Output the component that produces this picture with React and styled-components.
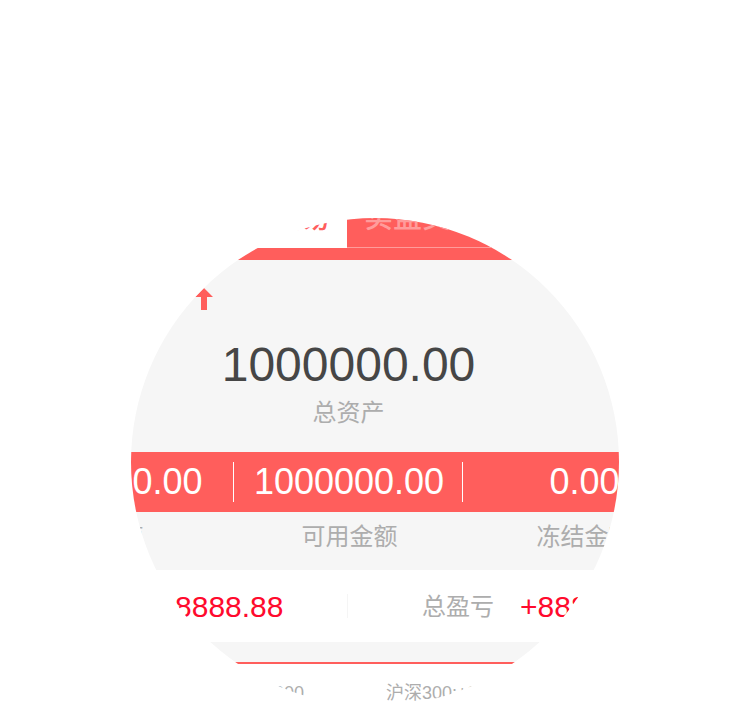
import React from "react";
import styled, { createGlobalStyle } from "styled-components";

const GlobalStyle = createGlobalStyle`
  * { box-sizing: border-box; }
  body {
    margin: 0;
    background: #fff;
    font-family: "Liberation Sans", "Noto Sans CJK SC", sans-serif;
    color: #adadad;
    overflow-x: hidden;
  }
`;

const Lens = styled.main`
  overflow: hidden;
  clip-path: circle(244px at 50% 462px);
`;

const Screen = styled.div`
  margin: 0 28px 0 -28px;
  padding-top: 188px;
  white-space: nowrap;
`;

const Tabs = styled.nav`
  display: grid;
  grid-template-columns: 1fr 1fr;
  border-bottom: 12px solid #ff5e5c;
`;

const Tab = styled.button`
  height: 60px;
  padding: 0 17px;
  border: 0;
  border-bottom: 1px solid ${(p) => (p.$active ? "#fff" : "#ff9c9b")};
  background: ${(p) => (p.$active ? "#fff" : "#ff5e5c")};
  color: ${(p) => (p.$active ? "#ff5e5c" : "#ff9c9b")};
  font: 500 29px/60px "Liberation Sans", "Noto Sans CJK SC", sans-serif;
  text-align: ${(p) => (p.$active ? "right" : "left")};
`;

const Overview = styled.section`
  display: flex;
  flex-direction: column;
  align-items: center;
  padding: 28px 0 23px 3px;
  background: #f6f6f6;
`;

const ArrowRow = styled.div`
  align-self: stretch;
  height: 22px;
  margin-bottom: 27px;
  padding-left: 220px;
`;

const Arrow = styled.svg`
  display: block;
  width: 18px;
  height: 22px;
  fill: #ff5e5c;
`;

const Total = styled.strong`
  font-size: 48px;
  font-weight: 400;
  line-height: 56px;
  color: #464646;
  margin-bottom: 4px;
`;

const Label = styled.span`
  font-size: 24px;
  line-height: 32px;
`;

const Columns = styled.div`
  display: grid;
  grid-template-columns: calc(50% - 113px) 229px 1fr;
  align-items: center;
  text-align: center;
`;

const Amounts = styled(Columns)`
  height: 60px;
  background: #ff5e5c;
  color: #fff;
`;

const Captions = styled(Columns)`
  padding: 9px 0 17px;
  background: #f6f6f6;
`;

const Column = styled.div`
  padding: ${(p) => (p.$side === "left" ? "0 0 0 10px" : p.$side === "right" ? "0 16px 0 0" : "0 0 0 2px")};
`;

const Amount = styled(Column)`
  font-size: 36px;
  line-height: 40px;
  border-right: ${(p) => (p.$side === "right" ? "0" : "1px solid #fff")};
`;

const Profits = styled.section`
  display: grid;
  grid-template-columns: 1fr 1fr;
  align-items: center;
  height: 72px;
`;

const Profit = styled.div`
  display: flex;
  justify-content: center;
  align-items: center;
  gap: 26px;
  height: 24px;
  padding: ${(p) => (p.$divided ? "2px 2px 0 0" : "2px 0 0")};
  border-left: ${(p) => (p.$divided ? "1px solid #f5f5f5" : "0")};
`;

const Gain = styled.span`
  font-size: 30px;
  line-height: 32px;
  color: #ff0a2d;
`;

const Spacer = styled.div`
  height: 22px;
  background: #f6f6f6;
  border-bottom: 2px solid #ff5e5c;
`;

const Indices = styled.footer`
  display: grid;
  grid-template-columns: 1fr 1fr;
  padding: 17px 0 5px;
  font-size: 18px;
  line-height: 24px;
`;

const Index = styled.span`
  padding: 0 43px 0 39px;
  text-align: ${(p) => (p.$end ? "right" : "left")};
`;

export default function App() {
  return (
    <>
      <GlobalStyle />
      <Lens>
        <Screen>
          <Tabs>
            <Tab $active>模拟交易</Tab>
            <Tab>实盘交易</Tab>
          </Tabs>
          <Overview>
            <ArrowRow>
              <Arrow viewBox="0 0 18 22" aria-hidden="true">
                <path d="M9 0 18 9H12V22H6V9H0Z" />
              </Arrow>
            </ArrowRow>
            <Total>1000000.00</Total>
            <Label>总资产</Label>
          </Overview>
          <Amounts>
            <Amount $side="left">1000000.00</Amount>
            <Amount>1000000.00</Amount>
            <Amount $side="right">0.00</Amount>
          </Amounts>
          <Captions>
            <Column $side="left"><Label>总市值</Label></Column>
            <Column><Label>可用金额</Label></Column>
            <Column $side="right"><Label>冻结金额</Label></Column>
          </Captions>
          <Profits>
            <Profit>
              <Label>当日盈亏</Label>
              <Gain>+8888.88</Gain>
            </Profit>
            <Profit $divided>
              <Label>总盈亏</Label>
              <Gain>+8888.88</Gain>
            </Profit>
          </Profits>
          <Spacer />
          <Indices>
            <Index $end>上证:3000</Index>
            <Index>沪深300:+88.88</Index>
          </Indices>
        </Screen>
      </Lens>
    </>
  );
}
